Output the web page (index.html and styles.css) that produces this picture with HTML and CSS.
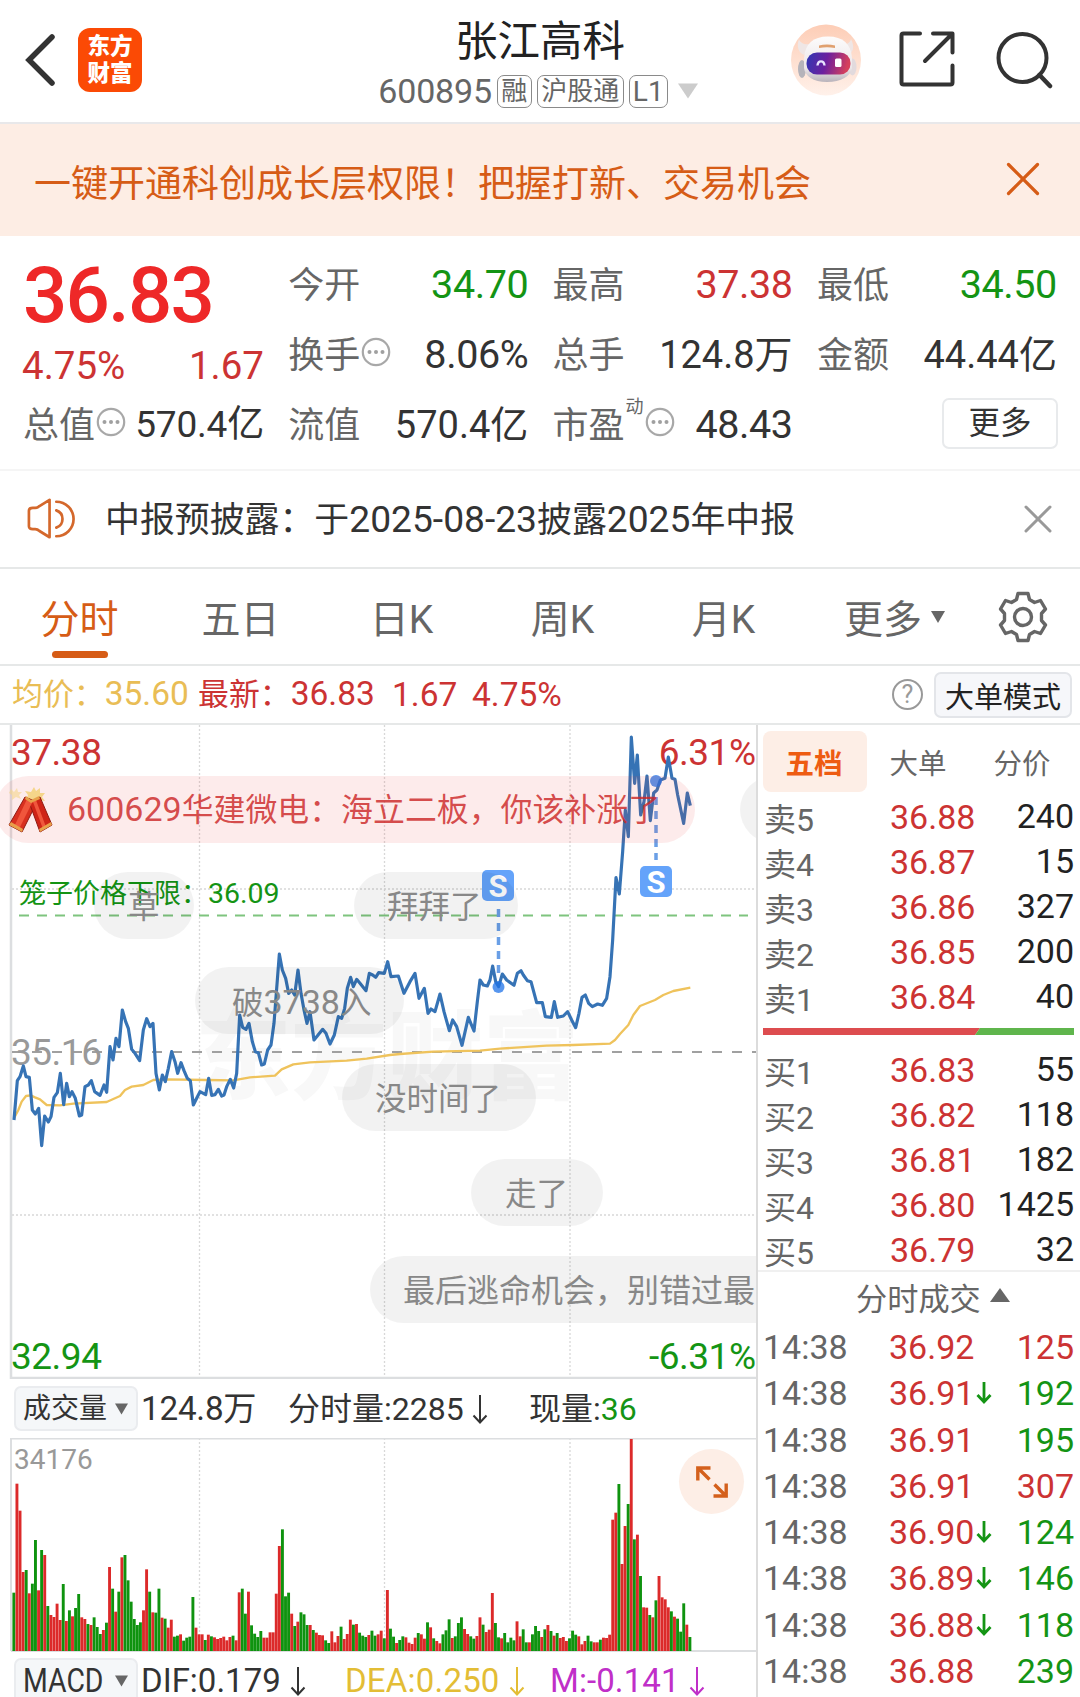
FILE: index.html
```html
<!DOCTYPE html>
<html lang="zh-CN">
<head>
<meta charset="utf-8">
<title>张江高科 600895</title>
<link rel="stylesheet" href="styles.css">
</head>
<body>
<svg class="defs" width="0" height="0" aria-hidden="true">
  <symbol id="more-dots" viewBox="0 0 30 30"><circle cx="15" cy="15" r="13.2" fill="none" stroke="#a8a8a8" stroke-width="2.200"/><g fill="#a0a0a0"><circle cx="8.5" cy="15" r="2"/><circle cx="15" cy="15" r="2"/><circle cx="21.5" cy="15" r="2"/></g></symbol>
  <symbol id="down" viewBox="0 0 16 32"><path d="M8 2V29M1.5 22.5L8 29.5L14.500 22.5" fill="none" stroke="currentColor" stroke-width="2"/></symbol>
  <symbol id="tick-down" viewBox="0 0 16 24"><path d="M8 1V21M1.500 14L8 21L14.500 14" fill="none" stroke="currentColor" stroke-width="2.800"/></symbol>
</svg>

<header class="header">
  <div class="header-left">
    <svg class="back" width="32" height="54" viewBox="0 0 32 54"><path d="M27 4L4 27L27 50" fill="none" stroke="#333" stroke-width="5.500" stroke-linecap="round" stroke-linejoin="miter"/></svg>
    <div class="logo"><span>东方</span><span>财富</span></div>
  </div>
  <div class="header-center">
    <h1 class="stock-name">张江高科</h1>
    <div class="stock-code"><span class="code">600895</span><span class="tag">融</span><span class="tag wide">沪股通</span><span class="tag latin">L1</span>
      <svg class="caret" width="20" height="16" viewBox="0 0 20 16"><path d="M0 0.500H20L10 15.500Z" fill="#ccc"/></svg></div>
  </div>
  <div class="header-right">
    <svg width="70" height="72" viewBox="0 0 70 72">
      <defs>
        <linearGradient id="halo" x1="0" y1="0" x2="0" y2="1"><stop offset="0" stop-color="#fdcdb6"/><stop offset="1" stop-color="#fff1ea"/></linearGradient>
        <linearGradient id="visor" x1="0" y1="0" x2="1" y2="0.150"><stop offset="0" stop-color="#2f38b4"/><stop offset="0.500" stop-color="#6c1f9e"/><stop offset="1" stop-color="#d6405c"/></linearGradient>
        <linearGradient id="shell" x1="0" y1="0" x2="0" y2="1"><stop offset="0" stop-color="#fdfcfc"/><stop offset="0.700" stop-color="#ece6e8"/><stop offset="1" stop-color="#b9b3bb"/></linearGradient>
      </defs>
      <ellipse cx="35" cy="36" rx="35" ry="35.500" fill="url(#halo)"/>
      <path d="M8 15C5 23 8 29 13 31L20 20C13 21 9 19 8 15ZM60 15C64 23 62 28 58 31L50 20C56 21 59 19 60 15Z" fill="#efe6e5"/>
      <ellipse cx="11" cy="45" rx="4" ry="9" fill="#b5b3ba"/><ellipse cx="61.500" cy="43" rx="4" ry="8.500" fill="#e2dadd"/>
      <path d="M13 34C14 20 22 12.500 37 12.500S60 20 61 34V44C60 52 50 58 36 58S14 52 13 44Z" fill="url(#shell)"/>
      <path d="M28 21.500Q36 19.500 44 21.500V24Q36 22.500 28 24Z" fill="#e0a06f"/>
      <rect x="15.500" y="28.500" width="44" height="22" rx="10.500" fill="url(#visor)"/>
      <path d="M26.500 41.500C27 36 33 36 33.500 41.500" fill="none" stroke="#e8e2ff" stroke-width="2.400"/>
      <rect x="44" y="34.500" width="6.500" height="8.500" rx="1.500" fill="#fff"/>
    </svg>
    <svg width="56" height="56" viewBox="0 0 56 56"><path d="M21 2.500H4.500Q2.500 2.500 2.500 4.500V51.500Q2.500 53.500 4.500 53.500H51.500Q53.500 53.500 53.500 51.500V34.500M34 2.500H53.500V21.500M52 4L26 30" fill="none" stroke="#333" stroke-width="4" stroke-linecap="round" stroke-linejoin="round"/></svg>
    <svg width="58" height="58" viewBox="0 0 58 58"><circle cx="27.500" cy="27" r="24" fill="none" stroke="#333" stroke-width="4"/><path d="M44.500 44L55 55" stroke="#333" stroke-width="4.500" stroke-linecap="round"/></svg>
  </div>
</header>

<section class="banner">
  <span>一键开通科创成长层权限！把握打新、交易机会</span>
  <svg width="34" height="34" viewBox="0 0 34 34"><path d="M2.500 2.500L31.500 31.500M31.500 2.500L2.500 31.500" stroke="#d65c16" stroke-width="3.200" stroke-linecap="round"/></svg>
</section>

<section class="quote">
  <div class="quote-main">
    <div class="price">36.83</div>
    <div class="change red"><span>4.75%</span><span>1.67</span></div>
  </div>
  <div class="cell"><span class="label">今开</span><span class="value green">34.70</span></div>
  <div class="cell"><span class="label">最高</span><span class="value red">37.38</span></div>
  <div class="cell"><span class="label">最低</span><span class="value green">34.50</span></div>
  <div class="cell"><span class="label">换手<svg class="dots"><use href="#more-dots"/></svg></span><span class="value">8.06%</span></div>
  <div class="cell"><span class="label">总手</span><span class="value cjk">124.8万</span></div>
  <div class="cell"><span class="label">金额</span><span class="value cjk">44.44亿</span></div>
  <div class="cell"><span class="label">总值<svg class="dots"><use href="#more-dots"/></svg></span><span class="value cjk tight">570.4亿</span></div>
  <div class="cell"><span class="label">流值</span><span class="value cjk">570.4亿</span></div>
  <div class="cell"><span class="label">市盈<sup>动</sup><svg class="dots"><use href="#more-dots"/></svg></span><span class="value">48.43</span></div>
  <div class="cell end"><button class="more-btn">更多</button></div>
</section>

<section class="notice">
  <svg width="48" height="44" viewBox="0 0 50 44"><g fill="none" stroke="#d4682c" stroke-width="2.800" stroke-linecap="round" stroke-linejoin="round"><path d="M2 13.500Q2 10.500 6 10.500H8.500Q11 10.500 13 8.500L23.500 2V41L13 34.500Q11 32.500 8.500 32.500H6Q2 32.500 2 29.500Z"/><path d="M30.500 13A9.500 9.500 0 0 1 30.500 31"/><path d="M30.500 4A18 18 0 0 1 30.500 40"/></g></svg>
  <span class="notice-text">中报预披露：于<span class="num">2025-08-23</span>披露<span class="num">2025</span>年中报</span>
  <svg width="30" height="30" viewBox="0 0 30 30"><path d="M3 3L27 27M27 3L3 27" stroke="#999" stroke-width="3" stroke-linecap="round"/></svg>
</section>

<nav class="tabs">
  <a class="tab active">分时</a>
  <a class="tab">五日</a>
  <a class="tab">日K</a>
  <a class="tab">周K</a>
  <a class="tab">月K</a>
  <a class="tab more"><span>更多</span><svg width="14" height="12" viewBox="0 0 14 12"><path d="M0 0H14L7 12Z" fill="#666"/></svg></a>
  <svg class="gear" width="50" height="52" viewBox="0 0 50 52"><g fill="none" stroke="#666" stroke-width="3.400" stroke-linejoin="round"><path d="M20 2.500H30L31.500 8.500L36.500 11.500L42.500 9.500L47.500 18L43.500 22.500V29.500L47.500 34L42.500 42.500L36.500 40.500L31.500 43.500L30 49.500H20L18.500 43.500L13.500 40.500L7.500 42.500L2.500 34L6.500 29.500V22.500L2.500 18L7.500 9.500L13.500 11.500L18.500 8.500Z"/><circle cx="25" cy="26" r="8.500"/></g></svg>
</nav>

<section class="summary">
  <span class="avg">均价：<span class="num">35.60</span></span><span class="latest red">最新：<span class="num">36.83</span></span><span class="diff red num">1.67</span><span class="pct red num">4.75%</span>
  <span class="help">?</span>
  <button class="mode-btn">大单模式</button>
</section>

<main class="board">
  <div class="charts">
    <div class="price-chart">
      <svg width="757" height="654" viewBox="0 725 757 654">
        <text class="watermark" x="195" y="1091">东方财富</text>
        <g class="grid"><path d="M199.500 725V1378M384.500 725V1378M570 725V1378M12 889H756M12 1215H756"/></g>
        <path class="frame" d="M11 725V1378H757"/>
        <path d="M12 1052H756" stroke="#a0a0a0" stroke-width="2" stroke-dasharray="10 10"/>
        <path d="M19 915.500H748" stroke="#7ec47e" stroke-width="2" stroke-dasharray="10 8"/>
        <text class="axis red" x="11" y="764.500">37.38</text>
        <text class="axis red" x="755.500" y="764.500" text-anchor="end">6.31%</text>
        <text class="axis grey" x="11" y="1065">35.16</text>
        <text class="axis green" x="11" y="1369">32.94</text>
        <text class="axis green" x="755.500" y="1369" text-anchor="end">-6.31%</text>
        <text class="limit" x="19" y="902.500">笼子价格下限：<tspan font-size="28.500">36.09</tspan></text>
        <g transform="translate(0 860) scale(.33333)" fill="none" stroke-linejoin="round">
          <polyline stroke="#efc35c" stroke-width="7" points="42,775 55,750 65,725 78,708 92,706 105,712 120,718 140,735 180,736 220,731 320,726 360,708 375,690 395,680 430,675 460,660 500,658 620,660 700,661 750,652 825,647 845,628 880,613 930,607 1040,602 1100,596 1170,585 1200,582 1300,575 1440,572 1500,566 1640,557 1720,555 1830,551 1845,540 1860,522 1885,495 1900,465 1920,438 1965,420 1990,405 2020,393 2071,383"/>
          <polyline stroke="#3673b5" stroke-width="9.500" points="42,780 52,662 60,650 70,618 78,650 88,652 97,750 106,762 116,745 125,857 134,768 145,786 153,770 162,712 172,698 181,640 191,734 200,670 208,710 216,695 226,715 238,768 245,765 255,680 265,675 274,662 284,695 300,706 312,675 320,697 330,560 339,600 348,535 357,560 367,450 377,485 385,505 395,568 405,580 419,602 430,510 440,476 450,500 459,490 468,640 478,690 487,645 496,665 505,625 515,575 525,605 533,640 543,608 552,632 562,655 571,662 580,735 590,715 600,695 617,704 626,655 635,706 645,704 655,688 665,708 672,705 680,680 691,658 701,684 710,640 719,465 728,502 738,508 747,490 757,545 766,575 775,578 785,615 793,612 803,570 813,555 822,490 838,282 847,330 857,355 866,400 875,390 884,405 894,330 903,400 912,450 921,490 930,455 942,540 950,530 968,508 978,520 990,552 1003,525 1015,470 1025,475 1034,445 1042,385 1052,352 1060,380 1070,358 1080,370 1098,392 1108,340 1118,345 1127,352 1136,338 1153,340 1163,305 1173,350 1195,348 1212,400 1230,365 1245,340 1257,415 1273,385 1284,460 1293,447 1305,455 1320,402 1332,455 1348,512 1358,480 1370,500 1386,556 1405,472 1422,513 1432,425 1440,360 1450,375 1462,378 1470,360 1478,318 1487,365 1496,380 1507,342 1520,360 1542,376 1552,340 1563,332 1570,345 1582,362 1593,365 1610,428 1627,428 1636,470 1654,472 1663,425 1673,472 1690,468 1703,455 1715,480 1727,503 1737,460 1746,412 1756,405 1766,430 1777,440 1793,432 1807,436 1820,415 1830,350 1838,240 1848,53 1858,102 1868,-25 1876,-150 1885,-70 1894,-369 1904,-230 1912,-315 1922,-135 1932,-175 1941,-252 1951,-118 1961,-201 1971,-210 1981,-240 1995,-245 2005,-309 2016,-245 2025,-242 2033,-195 2051,-110 2062,-201 2071,-163"/>
        </g>
        <g class="signal"><path d="M498.500 909V975M656 797V860"/><circle cx="498.500" cy="987" r="6"/><circle cx="656" cy="781" r="6"/><rect x="482" y="870" width="32" height="31" rx="5"/><rect x="640" y="866" width="32" height="31" rx="5"/><text x="498" y="896.500">S</text><text x="656" y="892.500">S</text></g>
      </svg>
      <div class="bullet hot"><svg width="46" height="46" viewBox="0 0 46 46"><g fill="#f5d58a"><path d="M26 0L28 4L32 1L32 6L37 6L34 10L37 14L31 13L27 16L24 12L18 13L20 8L17 4L23 5Z"/><path d="M3 2L6 5L9 1L10 5L14 5L11 8L13 12L8 10L4 13L4 8L1 6Z" opacity=".6"/></g><g stroke="#8f1a12"><path d="M17 10L29 15L14 45L1 38Z" fill="#d8301f"/><path d="M21 15L32 10L44 38L32 45Z" fill="#cf2417"/></g><path d="M19 12L25 14L11 42L6 40ZM25 15L28 13L38 40L35 42Z" fill="#f0563c"/><path d="M1 38L14 45L15 42L3 35ZM44 38L32 45L31 42L43 35ZM17 12L23 16L32 12L31 9L23 13L18 9Z" fill="#e8a04a"/></svg><span><span class="num">600629</span>华建微电：海立二板，你该补涨了</span></div>
      <div class="bullet b-grass">草</div>
      <div class="bullet b-bye">拜拜了</div>
      <div class="bullet b-break">破<span class="num">3738</span>入</div>
      <div class="bullet b-time">没时间了</div>
      <div class="bullet b-gone">走了</div>
      <div class="bullet b-last">最后逃命机会，别错过最</div>
      <div class="bullet b-edge"></div>
    </div>
    <div class="indicator">
      <button class="picker"><span>成交量</span><svg width="13" height="12" viewBox="0 0 14 12"><path d="M0 0H14L7 12Z" fill="#666"/></svg></button>
      <span class="vol-total">124.8万</span>
      <span class="vol-minute">分时量:2285<svg class="arrow"><use href="#down"/></svg></span>
      <span class="vol-now">现量:<b class="green">36</b></span>
    </div>
    <div class="volume-chart">
      <svg width="757" height="214" viewBox="0 1438 757 214">
        <g class="grid"><path d="M199.500 1438V1651M384.500 1438V1651M570 1438V1651"/></g>
        <path class="frame thin" d="M11 1651V1438.500H757M11 1651H757"/>
        <text class="vol-max" x="14" y="1469">34176</text>
        <g id="bars"></g>
      </svg>
      <button class="expand"><svg width="34" height="34" viewBox="0 0 34 34"><path d="M15.500 3H2.800V15.500M3 3L14.500 14.500M18.500 31H31.200V18.500M31 31L19.500 19.500" fill="none" stroke="#d4601c" stroke-width="3.400"/></svg></button>
    </div>
    <div class="indicator macd">
      <button class="picker"><span class="narrow">MACD</span><svg width="13" height="12" viewBox="0 0 14 12"><path d="M0 0H14L7 12Z" fill="#666"/></svg></button>
      <span class="dif">DIF:0.179<svg class="arrow"><use href="#down"/></svg></span>
      <span class="dea">DEA:0.250<svg class="arrow"><use href="#down"/></svg></span>
      <span class="m">M:-0.141<svg class="arrow"><use href="#down"/></svg></span>
    </div>
  </div>

  <aside class="depth">
    <div class="depth-tabs"><span class="on">五档</span><span>大单</span><span>分价</span></div>
    <div class="book">
      <div class="row"><span>卖5</span><b>36.88</b><i>240</i></div>
      <div class="row"><span>卖4</span><b>36.87</b><i>15</i></div>
      <div class="row"><span>卖3</span><b>36.86</b><i>327</i></div>
      <div class="row"><span>卖2</span><b>36.85</b><i>200</i></div>
      <div class="row"><span>卖1</span><b>36.84</b><i>40</i></div>
    </div>
    <svg class="ratio" width="311" height="7" viewBox="0 0 311 7"><path d="M0 0H217L212 7H0Z" fill="#dd4c4f"/><path d="M217 0H311V7H212Z" fill="#5fb54c"/></svg>
    <div class="book buy">
      <div class="row"><span>买1</span><b>36.83</b><i>55</i></div>
      <div class="row"><span>买2</span><b>36.82</b><i>118</i></div>
      <div class="row"><span>买3</span><b>36.81</b><i>182</i></div>
      <div class="row"><span>买4</span><b>36.80</b><i>1425</i></div>
      <div class="row"><span>买5</span><b>36.79</b><i>32</i></div>
    </div>
    <div class="ticks-title"><span>分时成交</span><svg width="20" height="14" viewBox="0 0 20 14"><path d="M10 0L20 14H0Z" fill="#666"/></svg></div>
    <div class="ticks">
      <div class="row"><span>14:38</span><b>36.92</b><i class="red">125</i></div>
      <div class="row"><span>14:38</span><b>36.91<svg><use href="#tick-down"/></svg></b><i class="green">192</i></div>
      <div class="row"><span>14:38</span><b>36.91</b><i class="green">195</i></div>
      <div class="row"><span>14:38</span><b>36.91</b><i class="red">307</i></div>
      <div class="row"><span>14:38</span><b>36.90<svg><use href="#tick-down"/></svg></b><i class="green">124</i></div>
      <div class="row"><span>14:38</span><b>36.89<svg><use href="#tick-down"/></svg></b><i class="green">146</i></div>
      <div class="row"><span>14:38</span><b>36.88<svg><use href="#tick-down"/></svg></b><i class="green">118</i></div>
      <div class="row"><span>14:38</span><b>36.88</b><i class="green">239</i></div>
    </div>
  </aside>
</main>
<script src="volume.js"></script>
</body>
</html>
```
FILE: styles.css
```css
* { box-sizing: border-box; }
body {
  margin: 0; width: 1080px; height: 1697px; overflow: hidden;
  background: #fff; color: #333;
  font-family: Roboto, "Noto Sans CJK SC", sans-serif;
}
button { margin: 0; padding: 0; font: inherit; color: inherit; background: none; border: 0; }
svg { flex: none; display: block; }
.defs { position: absolute; }
.red { color: #cc3333; fill: #cc3333; }
.green { color: #149414; fill: #149414; }

.header { height: 124px; display: grid; grid-template-columns: 1fr auto 1fr; border-bottom: 2px solid #e8e8ea; }
.header-left { display: flex; align-items: flex-start; padding: 28px 0 0 25px; gap: 21px; }
.back { margin-top: 5px; }
.logo {
  width: 64px; height: 64px; padding-bottom: 4px; border-radius: 12px; background: #fb4a05; color: #fff;
  display: flex; flex-direction: column; align-items: center; justify-content: center;
  font: 900 22.5px/27px "Noto Sans CJK SC", sans-serif;
}
.header-center { display: flex; flex-direction: column; align-items: center; padding-top: 15px; }
.stock-name { margin: 0; font-size: 42.5px; font-weight: 400; line-height: 54px; color: #222; }
.stock-code { display: flex; align-items: center; height: 36px; margin: 4px 4px 0 0; color: #666; }
.code { font-size: 34px; line-height: 36px; letter-spacing: -.2px; margin-right: 5px; }
.tag { height: 33px; padding: 0 3.500px; margin-right: 5px; border: 1.500px solid #8a8a8a; border-radius: 7px; font-size: 26px; line-height: 31px; }
.tag.latin { font-size: 28px; line-height: 32px; padding: 0 3px; }
.caret { margin-left: 5px; }
.header-right { display: flex; align-items: flex-start; justify-content: flex-end; padding: 24px 27px 0 0; }
.header-right svg:nth-child(2) { margin: 7px 40px 0 38px; }
.header-right svg:nth-child(3) { margin-top: 7px; }

.banner { height: 112px; padding: 0 40px 0 34px; display: flex; align-items: center; justify-content: space-between; background: #fdede4; color: #d65c16; font-size: 37px; line-height: 50px; }
.banner span { padding-top: 10px; }
.banner svg { margin-top: -2px; }

.quote { height: 235px; padding: 14px 23px 0 23px; display: grid; grid-template-columns: 241px repeat(3, 240px); column-gap: 24.300px; grid-auto-rows: 70px; border-bottom: 2px solid #f5f5f5; }
.quote-main { grid-row: span 2; }
.price { height: 92px; font-size: 78px; line-height: 92px; font-weight: 500; color: #ee2828; letter-spacing: -1.800px; }
.change { display: flex; justify-content: space-between; font-size: 38.500px; line-height: 48px; margin-left: -1px; }
.cell { display: flex; justify-content: space-between; align-items: center; line-height: 50px; white-space: nowrap; }
.cell.end { justify-content: flex-end; }
.label { display: flex; align-items: center; padding-top: 2px; font-size: 36px; color: #666; }
.label sup { align-self: flex-start; font-size: 18px; line-height: 20px; margin: -4px 0 0 1px; }
.dots { width: 30px; height: 30px; margin: -8px 0 0 1px; }
.value { font-size: 39.500px; letter-spacing: -.4px; }
.value.cjk { font-size: 38px; letter-spacing: 0; }
.value.cjk.tight { font-size: 37px; letter-spacing: -.2px; }
.more-btn { width: 116px; height: 51px; margin: -4px -1px 0 0; border: 2px solid #e8eaec; border-radius: 7px; font-size: 31.500px; line-height: 48px; }

.notice { height: 98px; padding: 0 27px; display: flex; align-items: center; border-bottom: 2px solid #e6e8e8; }
.notice-text { flex: 1; margin-left: 30px; padding-top: 1px; font-size: 34.900px; line-height: 48px; white-space: nowrap; }
.notice .num { font-size: 37.200px; }

.tabs { height: 97px; display: flex; align-items: center; border-bottom: 2px solid #e6e8e8; color: #666; }
.tab { width: 161px; height: 95px; padding-right: 2px; text-align: center; font-size: 39px; line-height: 103px; }
.tab.active { color: #d65c16; display: flex; flex-direction: column; align-items: center; }
.tab.active::after { content: ""; width: 56px; height: 7px; border-radius: 4px; background: #d65c16; margin-top: -21px; }
.tab.more { width: 181px; display: flex; align-items: center; justify-content: center; gap: 9px; }
.tab.more span { padding-top: 7px; }
.gear { margin-left: 12px; }

.summary { height: 59px; padding: 0 8px 0 12px; display: flex; align-items: center; border-bottom: 2px solid #e6e8e8; font-size: 30.900px; line-height: 42px; white-space: nowrap; }
.summary .num { font-size: 33.500px; }
.avg { width: 186px; color: #e9bd55; }
.latest { width: 194px; }
.diff { width: 80px; }
.help { margin-left: auto; margin-right: 11px; width: 31px; height: 31px; border: 2px solid #999; border-radius: 50%; color: #999; font-size: 25px; line-height: 28px; text-align: center; }
.mode-btn { width: 138px; height: 46px; border: 2px solid #e3e5e9; border-radius: 7px; background: #f6f7fa; color: #222; font-size: 29px; line-height: 48px; }

.board { display: grid; grid-template-columns: 756px 1fr; height: 972px; }
.charts { position: relative; overflow: hidden; }
.price-chart { position: relative; height: 654px; overflow: hidden; }
.grid path { stroke: #d8d8d8; stroke-width: 1.300; stroke-dasharray: 2 2; fill: none; }
.frame { fill: none; stroke: #dcdee0; stroke-width: 2.500; }
.frame.thin { stroke-width: 2; }
.axis { font-size: 37px; letter-spacing: -.5px; }
.grey { fill: #999; }
.limit { font-size: 27px; fill: #149414; }
.watermark { font-family: "Noto Sans CJK SC", sans-serif; font-weight: 900; font-size: 96px; fill: #f8f8f8; }
.signal path { stroke: #6a9fe6; stroke-width: 3.500; stroke-dasharray: 8 6; }
.signal circle { fill: #1f73e8; fill-opacity: .75; }
.signal rect { fill: #64a3fa; }
.signal text { font-size: 31px; font-weight: 700; fill: #fff; text-anchor: middle; }

/* comments drifting over the chart */
.bullet { position: absolute; height: 67px; padding: 0 33px; border-radius: 34px; background: rgba(0, 0, 0, .05); color: #888; font-size: 31.500px; line-height: 71px; white-space: nowrap; }
.bullet .num { font-size: 34px; }
.bullet.hot { left: -5px; top: 51px; width: 700px; padding: 0 0 0 13px; display: flex; align-items: center; gap: 13px; font-size: 31.900px; background: rgba(236, 60, 60, .1); color: rgba(204, 40, 40, .82); }
.b-grass { left: 94px; top: 147px; padding: 0 34px; }
.b-bye { left: 354px; top: 147px; padding-right: 36px; }
.b-break { left: 195px; top: 242px; padding: 0 33px 0 37px; }
.b-time { left: 342px; top: 339px; padding: 0 35px 0 33px; }
.b-gone { left: 471px; top: 434px; padding: 0 35px 0 34px; }
.b-last { left: 370px; top: 531px; font-size: 32px; }
.b-edge { left: 740px; top: 51px; width: 100px; }

.indicator { position: relative; height: 59px; padding-left: 14px; display: flex; align-items: center; font-size: 32px; line-height: 40px; white-space: nowrap; }
.indicator > span { display: flex; align-items: center; }
.indicator b { font-weight: 400; }
.picker { width: 124px; height: 45px; padding: 0 8px 0 7px; margin-right: 3px; display: flex; align-items: center; justify-content: space-between; border: 2px solid #eaecef; border-radius: 7px; background: #f5f7f9; font-size: 28px; }
.narrow { font-size: 33px; width: 80px; transform: scaleX(.86); transform-origin: 0 50%; }
.arrow { width: 16px; height: 32px; margin-left: 8px; }
.vol-total { width: 147px; font-size: 33.200px; letter-spacing: -.2px; }
.vol-minute { width: 241px; }
.macd { font-size: 33px; margin-top: -1px; }
.macd .arrow { margin-left: 9px; }
.dif { width: 204px; }
.dea { width: 205px; color: #e3bd35; letter-spacing: .2px; }
.m { color: #c02fc8; letter-spacing: .1px; }
.volume-chart { position: relative; height: 214px; }
.vol-max { font-size: 28px; fill: #999; }
.expand { position: absolute; left: 679px; top: 11px; width: 65px; height: 65px; border-radius: 50%; background: #fdeee6; display: flex; align-items: center; justify-content: center; }

.depth { border-left: 2px solid #dcdcdc; padding-left: 5px; }
.depth-tabs { display: flex; align-items: center; padding-top: 5px; height: 68px; font-size: 28.500px; line-height: 61px; color: #666; }
.depth-tabs span { width: 104px; height: 61px; padding: 3px 2px 0 0; text-align: center; }
.depth-tabs .on { border-radius: 8px; background: #fdeee6; color: #ee5c12; font-weight: 700; }
.row { display: grid; grid-template-columns: 126px 100px 1fr; padding: 0 6px 0 1px; height: 45px; line-height: 45px; font-size: 34px; color: #666; }
.row b, .row i { font-weight: 400; font-style: normal; }
.row b { color: #cc3333; display: flex; align-items: center; }
.row i { text-align: right; color: #222; }
.row i.red { color: #cc3333; }
.row i.green { color: #149414; }
.book .row span { font-size: 32px; padding-top: 3px; }
.book .row b, .book .row i { height: 45px; line-height: 44px; margin-top: -1px; }
.book { margin-top: 2px; }
.ratio { margin: 8px 0 0 0; }
.buy { margin-top: 13px; }
.ticks-title { height: 54px; margin: -3px 0 0 -5px; border-top: 2px solid #f0f0f0; padding-left: 98px; display: flex; align-items: center; gap: 9px; color: #666; font-size: 31.200px; line-height: 50px; }
.ticks-title span { padding-top: 3px; }
.ticks-title svg { margin-top: -6px; }
.ticks .row { grid-template-columns: 125px 106px 1fr; height: 46.250px; line-height: 46px; padding-left: 0; }
.ticks .row b { padding-left: 1px; }
.ticks svg { width: 16px; height: 24px; margin-left: 2px; color: #149414; }
```
FILE: volume.js
```js
// Minute volumes in thirds of a pixel; negative values are down minutes.
const volumes = [
  -175,502,421,237,-243,173,-202,-333,182,-303,288,-135,108,102,142,93,-201,90,-122,104,
  -129,-171,101,96,-81,78,-101,-72,-51,63,-85,252,-187,118,-178,281,-288,-212,-148,-96,
  -78,-86,122,245,-178,116,-115,-187,100,-97,70,94,-43,-46,50,-31,-40,-43,-162,70,
  50,50,-33,49,-44,41,36,39,43,32,42,-46,32,176,-187,-112,178,-77,-52,-42,
  -60,40,40,56,56,172,315,-365,-164,-175,112,-75,88,-116,-110,-78,78,-63,55,48,
  47,-32,-24,59,26,45,-73,36,51,94,-79,81,-55,-46,-42,48,-61,-46,50,61,
  -38,183,-67,-43,24,-33,-44,41,25,21,40,-54,50,37,-86,71,-38,30,23,-50,
  -62,-95,39,-44,-84,-101,66,51,-44,-37,45,101,-79,57,64,174,-84,-41,38,-54,
  -26,-40,-32,89,44,-65,-26,26,-50,-75,-60,42,-65,78,-60,46,-54,39,42,30,
  -38,-61,-49,44,20,30,-46,-29,26,26,-34,40,39,49,394,415,-501,261,375,-441,
  636,-335,349,-225,131,130,-108,101,-152,225,161,155,131,-119,103,-97,-58,-143,79,-42
];
const bars = document.getElementById("bars");
volumes.forEach((v, i) => {
  const h = Math.abs(v) / 3;
  const r = document.createElementNS("http://www.w3.org/2000/svg", "rect");
  r.setAttribute("x", (12.4 + i * 3.087).toFixed(2));
  r.setAttribute("y", (1651 - h).toFixed(2));
  r.setAttribute("width", "2.9");
  r.setAttribute("height", h.toFixed(2));
  r.setAttribute("fill", v > 0 ? "#dc2a2a" : "#0f930f");
  bars.appendChild(r);
});
```
